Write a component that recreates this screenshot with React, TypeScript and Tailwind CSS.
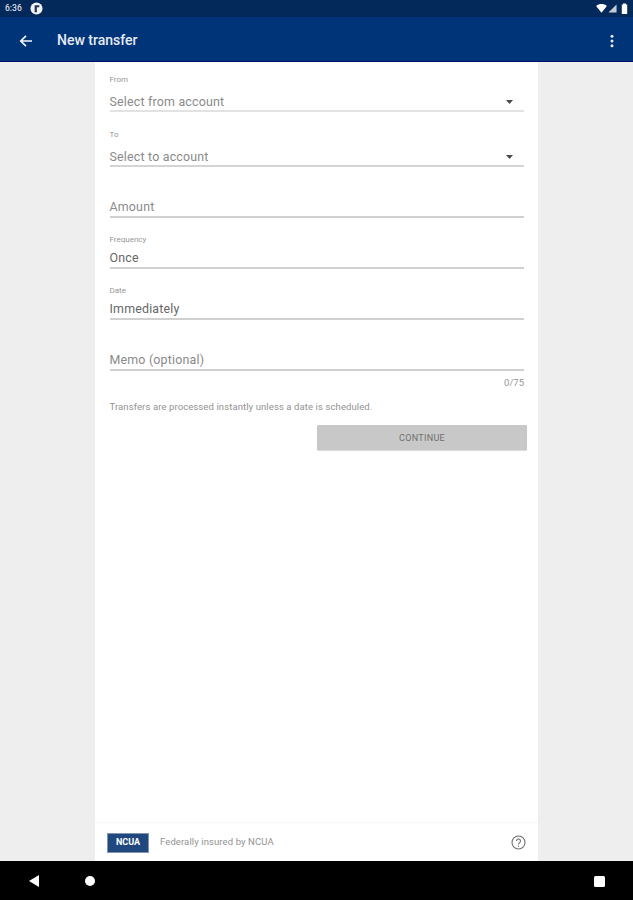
import React from "react";

function Field({ label, value, top, height, dark, arrow, lineClass, labelGap = "mb-[6px]", lineGap = "mt-[1px]" }: { label?: string; value: string; top: string; height: string; dark?: boolean; arrow?: boolean; lineClass: string; labelGap?: string; lineGap?: string }) {
  return (
    <div className={`${top} ${height} flex flex-col justify-end`}>
      {label && <div className={`text-[8px] leading-[10px] text-[#969696] ${labelGap}`}>{label}</div>}
      <div className={`flex items-center justify-between h-[16px] text-[12.4px] leading-[16px] tracking-[0.2px] ${dark ? "text-[#666666]" : "text-[#8a8a8a]"}`}>
        <span>{value}</span>
        {arrow && (
          <svg width="7" height="4" viewBox="0 0 7 4" className="mr-[11px]">
            <path d="M0 0h7L3.5 4z" fill="#4a4a4a" />
          </svg>
        )}
      </div>
      <div className={`${lineGap} h-[2px] ${lineClass}`} />
    </div>
  );
}

export default function App() {
  return (
    <div className="w-[633px] h-[900px] flex flex-col overflow-hidden bg-[#eeeeee] font-['Roboto',sans-serif]">
      <div className="h-[17px] shrink-0 bg-[#03295a] flex items-center justify-between pl-[5px] pr-[5px] text-white">
        <div className="flex items-center gap-[8px]">
          <span className="text-[8.5px] leading-none font-medium text-[#d8dfe9]">6:36</span>
          <svg width="13" height="13" viewBox="0 0 14 14">
            <circle cx="7" cy="7" r="6.5" fill="#f2f2f2" />
            <path d="M5 3.5h5v2.2H7.4V11H5z" fill="#1c3558" />
          </svg>
        </div>
        <div className="flex items-center gap-[1px]">
          <svg width="11" height="9" viewBox="0 0 12 10"><path d="M0 2.2C3.4-.6 8.6-.6 12 2.2L6 9.6z" fill="#fff" /></svg>
          <svg width="9" height="9" viewBox="0 0 10 10"><path d="M9.5 0.5V9.5H0.5z" fill="#c4cbd6" /></svg>
          <svg width="7" height="11" viewBox="0 0 7 11" className="ml-[3px]"><path d="M2 0.5h3v1h1.2V11H0.8V1.5H2z" fill="#fff" /></svg>
        </div>
      </div>

      <div className="h-[45px] shrink-0 pt-[3px] bg-[#003478] border-b-[1.5px] border-[#000f6b] flex items-center text-white">
        <svg width="14" height="14" viewBox="0 0 14 14" className="ml-[19px]" fill="none" stroke="#f4f6fa" strokeWidth="1.7">
          <path d="M13 7H2M7 1.8 1.8 7 7 12.2" />
        </svg>
        <span className="ml-[24px] text-[14px] font-medium tracking-[0px] text-[#e6ebf3]">New transfer</span>
        <svg width="4" height="14" viewBox="0 0 4 14" className="ml-auto mr-[19px]" fill="#e6ebf3">
          <circle cx="2" cy="2.2" r="1.5" /><circle cx="2" cy="7" r="1.5" /><circle cx="2" cy="11.8" r="1.5" />
        </svg>
      </div>

      <div className="flex-1 min-h-0 w-[443px] ml-[95px] bg-white flex flex-col">
        <div className="flex-1 pl-[14.5px] pr-[14px]">
          <Field label="From" value="Select from account" arrow top="mt-[12px]" height="h-[38px]" labelGap="mb-[9px]" lineGap="mt-0" lineClass="bg-[#e2e2e2]" />
          <Field label="To" value="Select to account" arrow top="mt-[15px]" height="h-[40px]" labelGap="mb-[9px]" lineGap="mt-0" lineClass="bg-[#d4d4d4]" />
          <Field value="Amount" top="mt-[30px]" height="h-[21px]" lineClass="bg-[#d0d0d0]" />
          <Field label="Frequency" value="Once" dark top="mt-[16px]" height="h-[35px]" labelGap="mb-[5px]" lineClass="bg-[#d0d0d0]" />
          <Field label="Date" value="Immediately" dark top="mt-[16px]" height="h-[35px]" labelGap="mb-[5px]" lineClass="bg-[#d0d0d0]" />
          <Field value="Memo (optional)" top="mt-[30px]" height="h-[21px]" lineClass="bg-[#d0d0d0]" />
          <div className="mt-[6px] text-right text-[9.5px] leading-[12px] text-[#969696]">0/75</div>
          <div className="mt-[12px] text-[9.5px] leading-[12px] tracking-[0.1px] text-[#929292]">Transfers are processed instantly unless a date is scheduled.</div>
          <div className="mt-[12px] -mr-[3px] flex justify-end">
            <div className="w-[210px] h-[25px] pt-[2px] bg-[#c8c8c8] rounded-[1px] shadow-[0_1px_1px_rgba(0,0,0,0.15)] flex items-center justify-center text-[9px] font-normal tracking-[0.3px] text-[#707070]">CONTINUE</div>
          </div>
        </div>

        <div className="h-[39px] shrink-0 pt-[1px] border-t border-[#f7f7f7] flex items-center pl-[12px] pr-[12px]">
          <div className="w-[42px] h-[20px] bg-[#20487f] border border-[#8296b4] flex items-center justify-center text-[9px] font-bold leading-none text-white">NCUA</div>
          <span className="ml-[11px] text-[9.5px] tracking-[0.1px] text-[#929292]">Federally insured by NCUA</span>
          <svg width="15" height="15" viewBox="0 0 15 15" className="ml-auto mr-0" fill="none" stroke="#707070" strokeWidth="1.1">
            <circle cx="7.5" cy="7.5" r="6.5" />
            <path d="M5.5 6a2 2 0 1 1 3.2 1.6c-.8.6-1.2.9-1.2 1.9" />
            <path d="M7.5 10.7v1.2" />
          </svg>
        </div>
      </div>

      <div className="h-[39px] shrink-0 bg-black relative">
        <svg width="12" height="14" viewBox="0 0 12 14" className="absolute left-[28px] top-[13px]"><path d="M11 1v12L1 7z" fill="#fff" /></svg>
        <div className="absolute left-[85px] top-[15px] w-[10px] h-[10px] rounded-full bg-white" />
        <div className="absolute left-[594px] top-[15px] w-[11px] h-[11px] rounded-[1.5px] bg-white" />
      </div>
    </div>
  );
}
